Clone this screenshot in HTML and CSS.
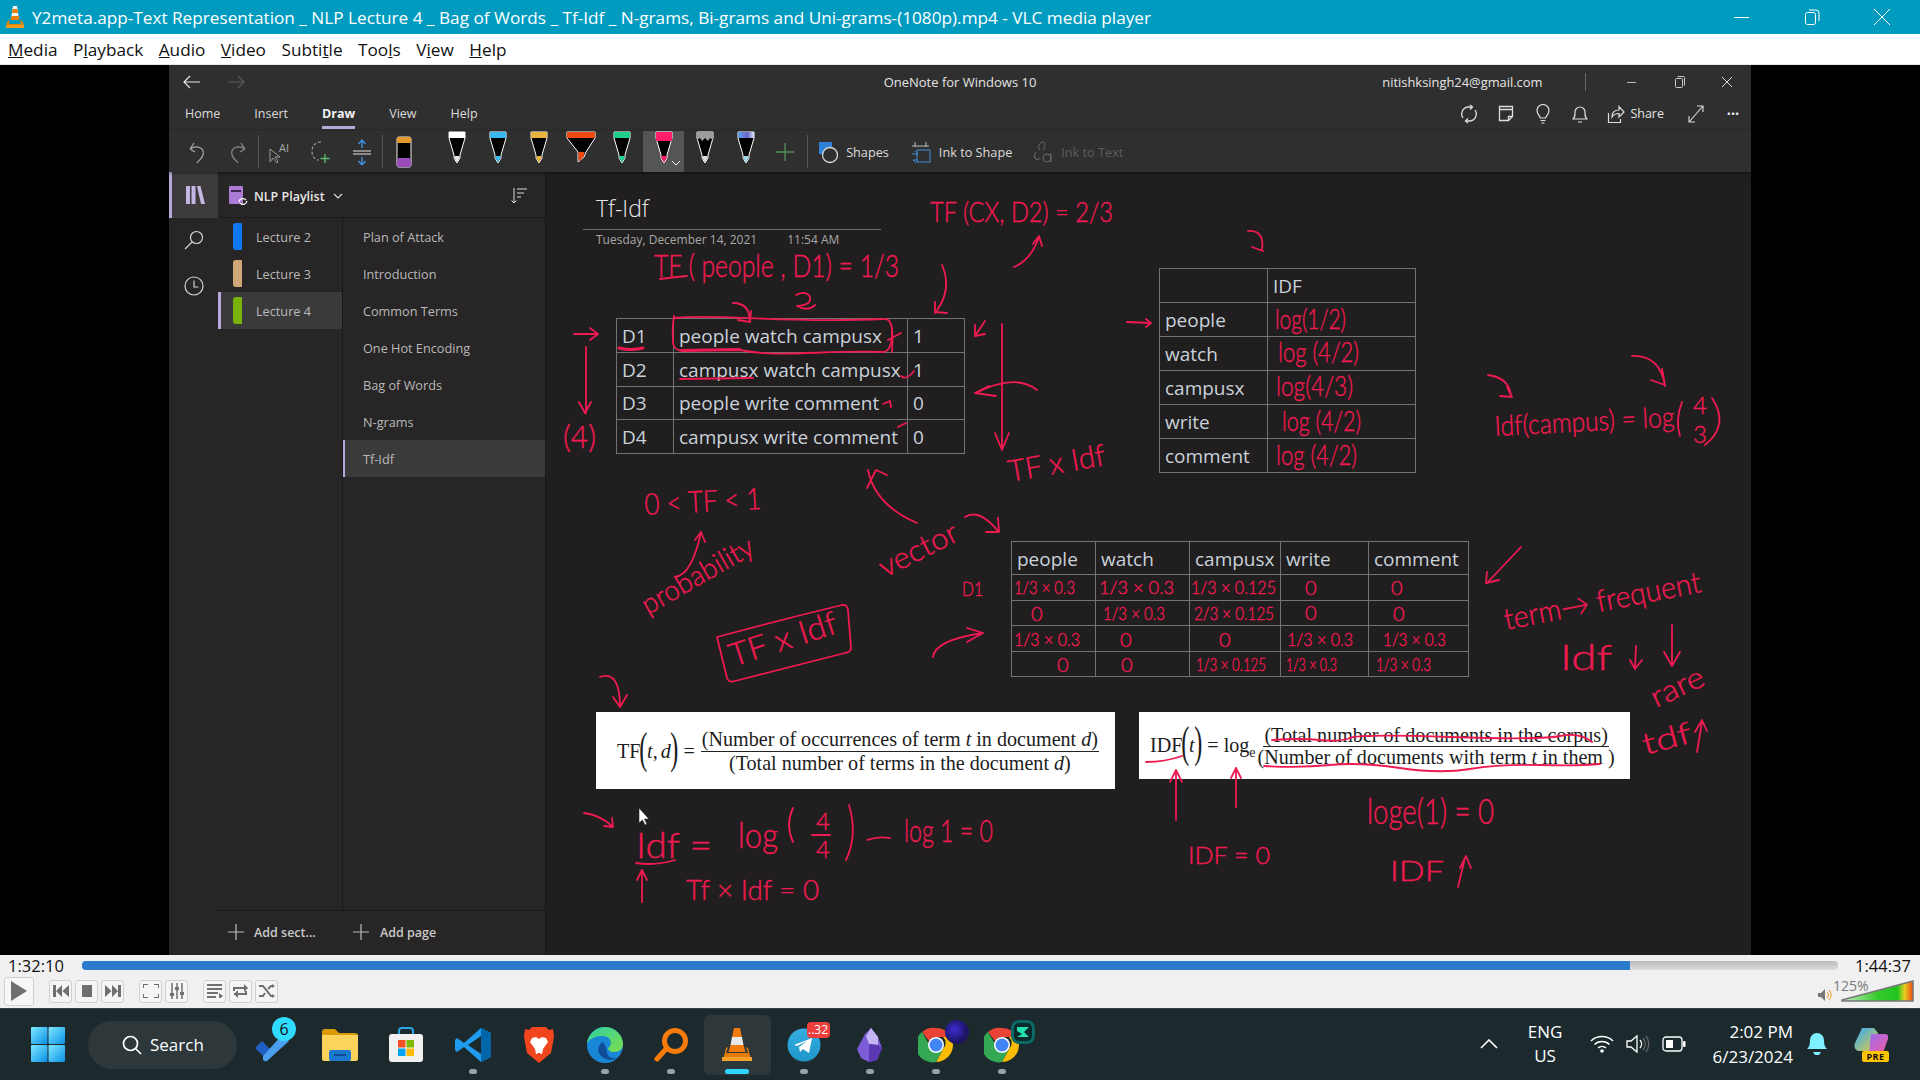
FILE: index.html
```html
<!DOCTYPE html>
<html lang="en">
<head>
<meta charset="utf-8">
<title>VLC media player</title>
<link rel="stylesheet" href="styles.css">
</head>
<body>
<div class="screen">

<header class="title-bar">
  <svg class="cone-small" viewBox="0 0 20 24"><path d="M8 1h4l2 13H6z" fill="#f5f5f5"/><path d="M7.600 4h4.800l.6 4H7zM6.400 11h7.200l.6 4H5.800z" fill="#f07d00"/><path d="M5 15l-3 2-1 6h18l-1-6-3-2 1 4H4z" fill="#e88400"/><rect x="1" y="20" width="18" height="3" fill="#f39a1c"/></svg>
  <span class="title-text">Y2meta.app-Text Representation _ NLP Lecture 4 _ Bag of Words _ Tf-Idf _ N-grams, Bi-grams and Uni-grams-(1080p).mp4 - VLC media player</span>
  <div class="win-btns">
    <span class="win-btn"><svg width="16" height="16" viewBox="0 0 16 16"><path d="M0 8.500h15" stroke="#fff" fill="none"/></svg></span>
    <span class="win-btn"><svg width="16" height="16" viewBox="0 0 16 16"><rect x="1.500" y="3.500" width="10" height="12" rx="2" stroke="#fff" fill="none"/><path d="M5 1h7a3 3 0 0 1 3 3v8" stroke="#fff" fill="none"/></svg></span>
    <span class="win-btn"><svg width="18" height="18" viewBox="0 0 18 18"><path d="M1 1l16 16M17 1L1 17" stroke="#fff" fill="none"/></svg></span>
  </div>
</header>

<nav class="menu-bar">
  <span class="menu-item"><u>M</u>edia</span>
  <span class="menu-item">P<u>l</u>ayback</span>
  <span class="menu-item"><u>A</u>udio</span>
  <span class="menu-item"><u>V</u>ideo</span>
  <span class="menu-item">Subti<u>t</u>le</span>
  <span class="menu-item">Too<u>l</u>s</span>
  <span class="menu-item">V<u>i</u>ew</span>
  <span class="menu-item"><u>H</u>elp</span>
</nav>

<main class="video">
<div class="app">

  <div class="app-bar">
    <div class="app-nav">
      <span class="nav-slot"><svg width="18" height="14" viewBox="0 0 18 14"><path d="M17 7H1M7 1L1 7l6 6" stroke="#e8e8e8" stroke-width="1.200" fill="none"/></svg></span>
      <span class="nav-slot"><svg width="18" height="14" viewBox="0 0 18 14"><path d="M1 7h16M11 1l6 6-6 6" stroke="#5c5b5b" stroke-width="1.200" fill="none"/></svg></span>
    </div>
    <div class="app-title">OneNote for Windows 10</div>
    <div class="app-account">
      <span class="account-mail">nitishksingh24@gmail.com</span>
      <span class="account-sep"></span>
      <span class="app-win"><svg width="12" height="12" viewBox="0 0 12 12"><path d="M1 6.500h9" stroke="#bbb" fill="none"/></svg></span>
      <span class="app-win"><svg width="12" height="14" viewBox="0 0 12 14"><rect x="1.500" y="3.500" width="7" height="9" rx="1" stroke="#ccc" fill="none"/><path d="M3.500 1.500h6a1 1 0 0 1 1 1v8" stroke="#ccc" fill="none"/></svg></span>
      <span class="app-win"><svg width="12" height="12" viewBox="0 0 12 12"><path d="M1 1l10 10M11 1L1 11" stroke="#ddd" fill="none"/></svg></span>
    </div>
  </div>

  <div class="tabs">
    <span class="tab">Home</span>
    <span class="tab">Insert</span>
    <span class="tab tab-active">Draw</span>
    <span class="tab">View</span>
    <span class="tab">Help</span>
    <div class="tab-tools">
      <span class="tab-icon"><svg width="18" height="20" viewBox="0 0 18 20"><path d="M3 14A7 7 0 0 1 9 3h3M15 6a7 7 0 0 1-6 11H6" stroke="#ddd" stroke-width="1.300" fill="none"/><path d="M10 1l2.500 2L10 5.500M8 14.500L5.500 17 8 19" stroke="#ddd" stroke-width="1.300" fill="none"/></svg></span>
      <span class="tab-icon"><svg width="16" height="18" viewBox="0 0 16 18"><path d="M1.500 1.500h13v10l-4 4h-9z" stroke="#ddd" stroke-width="1.300" fill="none"/><path d="M1.500 4.500h13M10.500 15.500v-4h4" stroke="#ddd" stroke-width="1.300" fill="none"/></svg></span>
      <span class="tab-icon"><svg width="14" height="20" viewBox="0 0 14 20"><path d="M4.500 14C3 11 1 9.500 1 6.500a6 6 0 0 1 12 0c0 3-2 4.500-3.500 7.500zM4.500 16.500h5M5.500 19h3" stroke="#ddd" stroke-width="1.200" fill="none"/></svg></span>
      <span class="tab-icon"><svg width="16" height="20" viewBox="0 0 16 20"><path d="M1 15c2-2 2-3 2-7a5 5 0 0 1 10 0c0 4 0 5 2 7zM6 18h4" stroke="#ddd" stroke-width="1.200" fill="none"/></svg></span>
      <span class="share"><svg width="18" height="20" viewBox="0 0 18 20"><path d="M1.500 9v9.500h12V15M5 13c0-5 3-7 7-7V2.500L17 8l-5 5V9.500C9 9.500 6.500 10.500 5 13z" stroke="#ddd" stroke-width="1.200" fill="none"/></svg>Share</span>
      <span class="tab-icon tab-icon-wide"><svg width="16" height="18" viewBox="0 0 16 18"><path d="M1 17L15 1M9 1h6v6M1 11v6h6" stroke="#ddd" stroke-width="1.100" fill="none"/></svg></span>
      <span class="tab-dots">&#8226;&#8226;&#8226;</span>
    </div>
  </div>

  <div class="tools">
    <span class="tool"><svg width="20" height="24" viewBox="0 0 20 24"><path d="M3 9l5 3M3 9l4-6M3 9c6-4 15-2 13 6-1 4-5 6-6 8" stroke="#a9a9a9" stroke-width="1.200" fill="none"/></svg></span>
    <span class="tool tool-dim"><svg width="20" height="24" viewBox="0 0 20 24"><path d="M17 9l-5 3M17 9l-4-6M17 9C11 5 2 7 4 15c1 4 5 6 6 8" stroke="#8d8c8c" stroke-width="1.200" fill="none"/></svg></span>
    <span class="tool-sep"></span>
    <span class="tool tool-lasso"><svg width="22" height="26" viewBox="0 0 22 26"><path d="M2 10v13l3-4 4 5 1-2-3-4h5z" stroke="#9a9a9a" fill="none"/></svg><span class="lasso-a">AI</span></span>
    <span class="tool"><svg width="22" height="26" viewBox="0 0 22 26"><path d="M11 3c-5 0-9 3-9 9s3 9 7 9" stroke="#9a9a9a" stroke-width="1.200" stroke-dasharray="3 2" fill="none"/><path d="M15 15v9M10.500 19.500h9" stroke="#58b96a" stroke-width="1.400" fill="none"/></svg></span>
    <span class="tool"><svg width="20" height="26" viewBox="0 0 20 26"><path d="M1 12h18M1 15h18" stroke="#a9a9a9" stroke-width="1.300" fill="none"/><path d="M10 1v8M6.500 5L10 1l3.500 4M10 18v8M6.500 22l3.500 4 3.500-4" stroke="#3d8fd8" stroke-width="1.500" fill="none"/></svg></span>
    <span class="tool-sep"></span>
    <span class="tool"><svg width="16" height="32" viewBox="0 0 16 32"><rect x="1" y="1" width="14" height="30" rx="2" fill="#000" stroke="#f2f2f2"/><rect x="1" y="1" width="14" height="6" fill="#e59a2f"/><rect x="1" y="22" width="14" height="9" rx="2" fill="#9a4cb8"/></svg></span>
    <div class="pens">
      <span class="pen"><svg width="18" height="32" viewBox="0 0 18 32"><path d="M1 1h16v6l-5 17v3l-3 5-3-5v-3L1 7z" fill="#000" stroke="#fff"/><rect x="1" y="1" width="16" height="6" fill="#fff"/><path d="M6.500 25h5v2l-2.500 4.500L6.500 27z" fill="#e8e8e8"/></svg></span>
      <span class="pen"><svg width="18" height="32" viewBox="0 0 18 32"><path d="M1 1h16v6l-5 17v3l-3 5-3-5v-3L1 7z" fill="#000" stroke="#fff"/><rect x="1" y="1" width="16" height="6" fill="#3ab8f0"/><path d="M6.500 25h5v2l-2.500 4.500L6.500 27z" fill="#3ab8f0"/></svg></span>
      <span class="pen"><svg width="18" height="32" viewBox="0 0 18 32"><path d="M1 1h16v6l-5 17v3l-3 5-3-5v-3L1 7z" fill="#000" stroke="#fff"/><rect x="1" y="1" width="16" height="6" fill="#e8b23e"/><path d="M6.500 25h5v2l-2.500 4.500L6.500 27z" fill="#e8b23e"/></svg></span>
      <span class="pen"><svg width="30" height="32" viewBox="0 0 30 32"><path d="M1 1h28v6l-9 14-2 5-6 5v-10L1 7z" fill="#000" stroke="#fff"/><rect x="1" y="1" width="28" height="6" fill="#ef4a12"/><path d="M12.500 21h6l-1 5-5 4.500z" fill="#ef4a12"/></svg></span>
      <span class="pen"><svg width="18" height="32" viewBox="0 0 18 32"><path d="M1 1h16v6l-5 17v3l-3 5-3-5v-3L1 7z" fill="#000" stroke="#fff"/><rect x="1" y="1" width="16" height="6" fill="#1fd08c"/><path d="M6.500 25h5v2l-2.500 4.500L6.500 27z" fill="#1fd08c"/></svg></span>
      <span class="pen pen-active"><svg width="18" height="32" viewBox="0 0 18 32"><path d="M1 1h16v6l-5 17v3l-3 5-3-5v-3L1 7z" fill="#000" stroke="#fff"/><rect x="1" y="1" width="16" height="9" fill="#ff1f6d"/><path d="M6.500 25h5v2l-2.500 4.500L6.500 27z" fill="#ff1f6d"/></svg><svg class="pen-chev" width="10" height="6" viewBox="0 0 10 6"><path d="M1 1l4 4 4-4" stroke="#eee" fill="none"/></svg></span>
      <span class="pen"><svg width="18" height="32" viewBox="0 0 18 32"><path d="M1 1h16v6l-5 17v3l-3 5-3-5v-3L1 7z" fill="#000" stroke="#fff"/><path d="M1 1h16v8l-3-2-2 3-3-3-3 3-2-3-3 2z" fill="#9d9d9d"/><path d="M6.500 25h5v2l-2.500 4.500L6.500 27z" fill="#ddd"/></svg></span>
      <span class="pen"><svg width="18" height="32" viewBox="0 0 18 32"><defs><linearGradient id="galaxy" x1="0" y1="0" x2="1" y2="0"><stop offset="0" stop-color="#5aa7e8"/><stop offset="0.600" stop-color="#6c63c8"/><stop offset="1" stop-color="#d6e8f8"/></linearGradient></defs><path d="M1 1h16v6l-5 17v3l-3 5-3-5v-3L1 7z" fill="#000" stroke="#fff"/><rect x="1" y="1" width="16" height="6" fill="url(#galaxy)"/><path d="M6.500 25h5v2l-2.500 4.500L6.500 27z" fill="#9fd7ee"/></svg></span>
    </div>
    <span class="tool-plus"><svg width="18" height="18" viewBox="0 0 18 18"><path d="M9 0v18M0 9h18" stroke="#4d8f5c" stroke-width="1.300" fill="none"/></svg></span>
    <span class="tool-sep tool-sep-b"></span>
    <span class="tool-text"><svg width="20" height="24" viewBox="0 0 20 24"><rect x="1" y="2" width="13" height="12" fill="#2f80d8"/><circle cx="12" cy="15" r="7.500" fill="#302f2f" stroke="#d5d5d5" stroke-width="1.300"/></svg>Shapes</span>
    <span class="tool-text tool-text-ink"><svg width="20" height="24" viewBox="0 0 20 24"><path d="M1 6h17M4 2v5M15 2v5" stroke="#bbb" fill="none"/><rect x="6" y="10" width="13" height="12" stroke="#3d8fd8" fill="none"/><path d="M1 14h6l-3-3M7 20H2l3 3" stroke="#3d8fd8" fill="none"/></svg>Ink to Shape</span>
    <span class="tool-text tool-text-off"><svg width="20" height="24" viewBox="0 0 20 24"><path d="M7 10c-3-3 0-8 3-8s2 5 0 8M3 12c-2 2-2 6 1 8M1 17l3 3 3-2" stroke="#6b6a6a" fill="none"/><circle cx="14" cy="18" r="4" stroke="#6b6a6a" fill="none"/><path d="M18 13v9" stroke="#6b6a6a" fill="none"/></svg>Ink to Text</span>
  </div>

  <div class="body">
    <aside class="rail">
      <span class="rail-item rail-active"><svg width="20" height="18" viewBox="0 0 20 18"><path d="M1 0h4v18H1zM6.500 0h4v18h-4zM12 0l3.500 0 4.500 18h-4z" fill="#c4b7e4"/></svg></span>
      <span class="rail-item"><svg width="20" height="20" viewBox="0 0 20 20"><circle cx="12.500" cy="7.500" r="6" stroke="#d5d5d5" stroke-width="1.200" fill="none"/><path d="M8.300 11.800L1 19" stroke="#d5d5d5" stroke-width="1.200" fill="none"/></svg></span>
      <span class="rail-item"><svg width="20" height="20" viewBox="0 0 20 20"><circle cx="10" cy="10" r="9" stroke="#d5d5d5" stroke-width="1.200" fill="none"/><path d="M10 4.500V11h4.500" stroke="#d5d5d5" stroke-width="1.200" fill="none"/></svg></span>
    </aside>

    <aside class="panel">
      <div class="notebook">
        <svg class="nb-icon" width="20" height="22" viewBox="0 0 20 22"><rect x="0" y="1" width="14" height="18" rx="1" fill="#ab7bd6"/><rect x="2" y="5" width="10" height="2" fill="#3c2a55"/><path d="M10 17a4 4 0 0 1 7-2M18 16a4 4 0 0 1-7 2" stroke="#fff" stroke-width="1.300" fill="none"/></svg>
        <span class="nb-name">NLP Playlist</span>
        <svg class="nb-chev" width="10" height="6" viewBox="0 0 10 6"><path d="M1 1l4 4 4-4" stroke="#ddd" stroke-width="1.200" fill="none"/></svg>
        <svg class="nb-sort" width="16" height="16" viewBox="0 0 16 16"><path d="M3 0v15M0.500 12.500L3 15l2.500-2.500M6 1h10M6 5h7M6 9h4" stroke="#ddd" fill="none"/></svg>
      </div>
      <div class="lists">
        <ul class="sections">
          <li class="section"><span class="sec-tab sec-blue"></span>Lecture 2</li>
          <li class="section"><span class="sec-tab sec-tan"></span>Lecture 3</li>
          <li class="section section-active"><span class="sec-tab sec-green"></span>Lecture 4</li>
        </ul>
        <ul class="pages">
          <li class="page">Plan of Attack</li>
          <li class="page">Introduction</li>
          <li class="page">Common Terms</li>
          <li class="page">One Hot Encoding</li>
          <li class="page">Bag of Words</li>
          <li class="page">N-grams</li>
          <li class="page page-active">Tf-Idf</li>
        </ul>
      </div>
      <div class="panel-foot">
        <span class="add add-sect"><svg width="18" height="18" viewBox="0 0 18 18"><path d="M9 1v16M1 9h16" stroke="#bdbdbd" stroke-width="1.200" fill="none"/></svg>Add sect...</span>
        <span class="add add-page"><svg width="18" height="18" viewBox="0 0 18 18"><path d="M9 1v16M1 9h16" stroke="#bdbdbd" stroke-width="1.200" fill="none"/></svg>Add page</span>
      </div>
    </aside>

    <section class="canvas">
      <div class="page-head">
        <div class="page-title">Tf-Idf</div>
        <div class="page-meta"><span>Tuesday, December 14, 2021</span><span>11:54 AM</span></div>
      </div>

      <table class="grid t-docs">
        <tr><td class="c-doc">D1</td><td class="c-text">people watch campusx</td><td>1</td></tr>
        <tr><td>D2</td><td>campusx watch campusx</td><td>1</td></tr>
        <tr><td>D3</td><td>people write comment</td><td>0</td></tr>
        <tr><td>D4</td><td>campusx write comment</td><td>0</td></tr>
      </table>

      <table class="grid t-idf">
        <tr><td class="c-word"></td><td>IDF</td></tr>
        <tr><td>people</td><td></td></tr>
        <tr><td>watch</td><td></td></tr>
        <tr><td>campusx</td><td></td></tr>
        <tr><td>write</td><td></td></tr>
        <tr><td>comment</td><td></td></tr>
      </table>

      <table class="grid t-vec">
        <tr class="r-head"><td class="v1">people</td><td class="v2">watch</td><td class="v3">campusx</td><td class="v4">write</td><td>comment</td></tr>
        <tr><td></td><td></td><td></td><td></td><td></td></tr>
        <tr><td></td><td></td><td></td><td></td><td></td></tr>
        <tr><td></td><td></td><td></td><td></td><td></td></tr>
        <tr><td></td><td></td><td></td><td></td><td></td></tr>
      </table>

      <div class="formula f-tf">
        <span>TF</span><span class="paren">(</span><i>t</i><span class="comma">,</span><i>d</i><span class="paren">)</span><span class="eq">=</span>
        <div class="frac">
          <span class="num">(Number of occurrences of term <i>t</i> in document <i>d</i>)</span>
          <span class="den">(Total number of terms in the document <i>d</i>)</span>
        </div>
      </div>

      <div class="formula f-idf">
        <span>IDF</span><span class="paren">(</span><i>t</i><span class="paren">)</span><span class="eq">=</span><span>log</span><sub>e</sub>
        <div class="frac">
          <span class="num">(Total number of documents in the corpus)</span>
          <span class="den">(Number of documents with term <i>t</i> in them )</span>
        </div>
      </div>

      <svg class="ink" width="1205" height="783" viewBox="546 172 1205 783">
        <g class="ink-lines">
          <path d="M1014 267Q1031 260 1039 237M1033 244L1039 236 1042 246"/>
          <path d="M660 279Q675 277 687 276"/>
          <path d="M733 303Q750 303 750 322M738 320L750 322 751 311"/>
          <path d="M796 295Q806 290 810 297Q812 305 797 306Q808 312 815 305"/>
          <path d="M942 265Q953 290 935 313M935 302L935 312 947 313"/>
          <path d="M574 334L597 334M590 328L598 334 590 340"/>
          <path d="M586 347L586 413M579 402L585 413 591 402"/>
          <path d="M674 318C720 313 780 324 883 319Q892 318 892 332 892 350 884 352C820 350 780 358 740 350L685 351Q672 352 673 338Q672 328 674 316"/>
          <path d="M680 350L740 349" />
          <path class="thick" d="M619 348Q630 351 643 348"/>
          <path d="M680 379L753 378"/>
          <path d="M888 340L901 333M892 328Q893 340 892 352"/>
          <path d="M901 376Q906 381 914 371"/>
          <path d="M883 404L890 401 891 407"/>
          <path d="M898 427L906 423"/>
          <path d="M985 321L975 336M975 325L975 336 985 334"/>
          <path d="M1002 324L1002 450M995 433L1002 450 1009 433"/>
          <path d="M1037 390Q1015 373 976 393M989 386L975 393 996 396"/>
          <path d="M868 470Q875 505 917 523M867 488L876 470 887 475"/>
          <path d="M965 517Q979 508 998 531M986 532L999 532 998 518"/>
          <path d="M933 657Q935 640 983 633M967 628L983 633 967 642"/>
          <path d="M675 577Q692 575 701 532M695 540L701 532 705 542"/>
          <path d="M717 637Q780 620 842 605Q847 604 848 610L851 648Q851 652 845 653L735 681Q729 683 727 678z"/>
          <path d="M600 677Q620 670 620 707M613 697L620 707 627 695"/>
          <path d="M1248 231Q1265 230 1262 250M1252 247L1263 251"/>
          <path d="M1127 322L1151 323M1146 319L1151 323 1146 327"/>
          <path d="M1488 375Q1510 378 1511 397M1500 396L1512 397 1507 387"/>
          <path d="M1632 356Q1660 355 1665 386M1651 380L1665 385 1662 369"/>
          <path d="M1682 402Q1675 420 1680 436M1712 398Q1730 425 1705 445"/>
          <path d="M1521 547L1487 583M1487 572L1486 583 1499 580"/>
          <path d="M1636 646L1635 668M1630 660L1635 669 1642 660"/>
          <path d="M1672 625L1672 665M1664 652L1672 666 1680 652"/>
          <path d="M1697 752L1702 722M1695 732L1702 720 1707 731"/>
          <path d="M636 863Q655 866 675 860"/>
          <path d="M793 808Q785 825 793 842M849 805Q858 835 846 860"/>
          <path d="M812 835L830 835"/>
          <path d="M867 840Q878 836 890 838"/>
          <path d="M642 902L642 870M637 880L642 870 647 880"/>
          <path d="M1176 820L1176 772M1170 782L1176 770 1182 782"/>
          <path d="M1236 807L1236 768M1231 778L1236 768 1241 778"/>
          <path d="M1146 762Q1165 762 1182 756"/>
          <path d="M1272 740Q1300 738 1320 740T1350 738T1450 737T1560 736T1592 742"/>
          <path d="M1264 766Q1300 768 1330 765T1400 768T1470 769T1540 765T1600 764"/>
          <path d="M1458 887L1465 858M1460 868L1466 856 1471 868"/>
          <path d="M584 813Q600 815 612 826M604 826L613 827 612 818"/>
        </g>
        <g class="ink-text">
          <text class="s28" x="930" y="222" textLength="183" lengthAdjust="spacingAndGlyphs">TF (CX, D2) = 2/3</text>
          <text class="s32" x="654" y="277" textLength="245" lengthAdjust="spacingAndGlyphs">TF ( people , D1) = 1/3</text>
          <text class="s32" x="563" y="448" textLength="33" lengthAdjust="spacingAndGlyphs">(4)</text>
          <text class="s30" transform="rotate(-10 1010 482)" x="1010" y="482" textLength="98" lengthAdjust="spacingAndGlyphs">TF x Idf</text>
          <text class="s30" transform="rotate(-3 645 515)" x="645" y="515" textLength="117" lengthAdjust="spacingAndGlyphs">0 &lt; TF &lt; 1</text>
          <text class="s30" transform="rotate(-27 885 578)" x="885" y="578" textLength="85" lengthAdjust="spacingAndGlyphs">vector</text>
          <text class="s20" x="962" y="596" textLength="21" lengthAdjust="spacingAndGlyphs">D1</text>
          <text class="s28" transform="rotate(-30 648 615)" x="648" y="615" textLength="125" lengthAdjust="spacingAndGlyphs">probability</text>
          <text class="s32" transform="rotate(-18 733 667)" x="733" y="667" textLength="112" lengthAdjust="spacingAndGlyphs">TF x Idf</text>

          <text class="s28" x="1275" y="329" textLength="71" lengthAdjust="spacingAndGlyphs">log(1/2)</text>
          <text class="s28" x="1278" y="362" textLength="81" lengthAdjust="spacingAndGlyphs">log (4/2)</text>
          <text class="s28" x="1276" y="396" textLength="77" lengthAdjust="spacingAndGlyphs">log(4/3)</text>
          <text class="s28" x="1282" y="431" textLength="79" lengthAdjust="spacingAndGlyphs">log (4/2)</text>
          <text class="s28" x="1276" y="465" textLength="81" lengthAdjust="spacingAndGlyphs">log (4/2)</text>

          <text class="s28" transform="rotate(-3 1495 436)" x="1495" y="436" textLength="180" lengthAdjust="spacingAndGlyphs">Idf(campus) = log</text>
          <text class="s24" x="1693" y="414">4</text>
          <text class="s24" x="1693" y="443">3</text>

          <text class="s18" x="1014" y="594" textLength="61" lengthAdjust="spacingAndGlyphs">1/3 × 0.3</text>
          <text class="s18" x="1099" y="594" textLength="75" lengthAdjust="spacingAndGlyphs">1/3 ×  0.3</text>
          <text class="s18" x="1191" y="594" textLength="85" lengthAdjust="spacingAndGlyphs">1/3 × 0.125</text>
          <text class="s20" x="1305" y="595">0</text>
          <text class="s20" x="1391" y="595">0</text>
          <text class="s20" x="1031" y="621">0</text>
          <text class="s18" x="1103" y="620" textLength="62" lengthAdjust="spacingAndGlyphs">1/3 × 0.3</text>
          <text class="s18" x="1194" y="620" textLength="80" lengthAdjust="spacingAndGlyphs">2/3 × 0.125</text>
          <text class="s20" x="1305" y="620">0</text>
          <text class="s20" x="1393" y="621">0</text>
          <text class="s18" x="1014" y="646" textLength="66" lengthAdjust="spacingAndGlyphs">1/3 × 0.3</text>
          <text class="s20" x="1120" y="647">0</text>
          <text class="s20" x="1219" y="647">0</text>
          <text class="s18" x="1287" y="646" textLength="66" lengthAdjust="spacingAndGlyphs">1/3 × 0.3</text>
          <text class="s18" x="1383" y="646" textLength="63" lengthAdjust="spacingAndGlyphs">1/3 × 0.3</text>
          <text class="s20" x="1057" y="672">0</text>
          <text class="s20" x="1121" y="672">0</text>
          <text class="s18" x="1196" y="671" textLength="70" lengthAdjust="spacingAndGlyphs">1/3 × 0.125</text>
          <text class="s18" x="1286" y="671" textLength="51" lengthAdjust="spacingAndGlyphs">1/3 × 0.3</text>
          <text class="s18" x="1376" y="671" textLength="55" lengthAdjust="spacingAndGlyphs">1/3 × 0.3</text>

          <text class="s30" transform="rotate(-11 1506 630)" x="1506" y="630" textLength="200" lengthAdjust="spacingAndGlyphs">term→ frequent</text>
          <text class="s36" x="1560" y="670" textLength="52" lengthAdjust="spacingAndGlyphs">Idf</text>
          <text class="s30" transform="rotate(-25 1656 708)" x="1656" y="708" textLength="56" lengthAdjust="spacingAndGlyphs">rare</text>
          <text class="s30" transform="rotate(-15 1645 755)" x="1645" y="755" textLength="50" lengthAdjust="spacingAndGlyphs">tdf</text>

          <text class="s36" x="636" y="858" textLength="76" lengthAdjust="spacingAndGlyphs">Idf =</text>
          <text class="s36" x="738" y="848" textLength="40" lengthAdjust="spacingAndGlyphs">log</text>
          <text class="s24" x="816" y="830">4</text>
          <text class="s24" x="816" y="858">4</text>
          <text class="s32" x="904" y="842" textLength="89" lengthAdjust="spacingAndGlyphs">log 1 = 0</text>
          <text class="s28" x="686" y="900" textLength="133" lengthAdjust="spacingAndGlyphs">Tf × Idf = 0</text>
          <text class="s24" x="1188" y="864" textLength="82" lengthAdjust="spacingAndGlyphs">IDF = 0</text>
          <text class="s36" x="1367" y="824" textLength="127" lengthAdjust="spacingAndGlyphs">loge(1) = 0</text>
          <text class="s28" x="1390" y="881" textLength="54" lengthAdjust="spacingAndGlyphs">IDF</text>
        </g>
        <path class="pointer" d="M639 808L639 823 642.500 820 645 825 647 824 644.500 819 649 819z"/>
      </svg>
    </section>
  </div>
</div>
</main>

<section class="player">
  <div class="seek-row">
    <span class="time">1:32:10</span>
    <div class="seek"><div class="seek-fill"></div></div>
    <span class="time">1:44:37</span>
  </div>
  <div class="ctrl-row">
    <span class="btn btn-play"><svg width="16" height="20" viewBox="0 0 16 20"><path d="M0 0l16 10L0 20z" fill="#6f6f6f"/></svg></span>
    <div class="btn-group">
      <span class="btn"><svg width="16" height="12" viewBox="0 0 16 12"><path d="M0 0h3v12H0zM9 0v12L3 6zM16 0v12L9.500 6z" fill="#6f6f6f"/></svg></span>
      <span class="btn"><svg width="10" height="12" viewBox="0 0 10 12"><rect width="10" height="12" fill="#6f6f6f"/></svg></span>
      <span class="btn"><svg width="16" height="12" viewBox="0 0 16 12"><path d="M16 0h-3v12h3zM7 0v12l6-6zM0 0v12l6.500-6z" fill="#6f6f6f"/></svg></span>
    </div>
    <div class="btn-group">
      <span class="btn"><svg width="16" height="14" viewBox="0 0 16 14"><path d="M0 4V0h5M11 0h5v4M16 10v4h-5M5 14H0v-4" stroke="#6f6f6f" stroke-width="2" fill="none"/></svg></span>
      <span class="btn"><svg width="16" height="16" viewBox="0 0 16 16"><path d="M3 0v16M8 0v16M13 0v16" stroke="#6f6f6f" stroke-width="1.500"/><path d="M1 10h4v3H1zM6 4h4v3H6zM11 9h4v3h-4z" fill="#6f6f6f"/></svg></span>
    </div>
    <div class="btn-group">
      <span class="btn"><svg width="16" height="14" viewBox="0 0 16 14"><path d="M0 1h15M0 5h15M0 9h11M0 13h9" stroke="#6f6f6f" stroke-width="2"/><path d="M12 9l4 3-4 3z" fill="#6f6f6f"/></svg></span>
      <span class="btn"><svg width="16" height="14" viewBox="0 0 16 14"><path d="M1 7V4h12M1 10h12V7" stroke="#6f6f6f" stroke-width="2" fill="none"/><path d="M11 0l4 4-4 4zM5 6l-4 4 4 4z" fill="#6f6f6f"/></svg></span>
      <span class="btn"><svg width="16" height="14" viewBox="0 0 16 14"><path d="M0 2h4l8 10h2M0 12h4l2-3M9 5l3-3h2" stroke="#6f6f6f" stroke-width="2" fill="none"/><path d="M13 0l3 2-3 2zM13 10l3 2-3 2z" fill="#6f6f6f"/></svg></span>
    </div>
    <div class="volume">
      <svg class="vol-icon" width="14" height="12" viewBox="0 0 14 12"><path d="M0 4h3l4-4v12L3 8H0z" fill="#777"/><path d="M9 3a4 4 0 0 1 0 6M11 1a7 7 0 0 1 0 10" stroke="#f09020" fill="none"/></svg>
      <span class="vol-label">125%</span>
      <svg class="vol-bar" width="73" height="22" viewBox="0 0 73 22"><defs><linearGradient id="volg" x1="0" x2="1" y1="0" y2="0"><stop offset="0" stop-color="#c8efc8"/><stop offset="0.500" stop-color="#36c92c"/><stop offset="0.780" stop-color="#1fc51f"/><stop offset="0.880" stop-color="#e8d020"/><stop offset="1" stop-color="#f04a10"/></linearGradient></defs><path d="M1 20L72 1v20H1z" fill="url(#volg)" stroke="#777" stroke-width="1.500"/></svg>
    </div>
  </div>
</section>

<footer class="taskbar">
  <svg class="win-logo" width="34" height="35" viewBox="0 0 34 35"><defs><linearGradient id="wing" x1="0" y1="0" x2="1" y2="1"><stop offset="0" stop-color="#7fe9ff"/><stop offset="1" stop-color="#0a8fe6"/></linearGradient></defs><rect width="16.500" height="17" rx="1" fill="url(#wing)"/><rect x="17.500" width="16.500" height="17" rx="1" fill="url(#wing)"/><rect y="18" width="16.500" height="17" rx="1" fill="url(#wing)"/><rect x="17.500" y="18" width="16.500" height="17" rx="1" fill="url(#wing)"/></svg>
  <div class="search-pill">
    <svg width="20" height="20" viewBox="0 0 20 20"><circle cx="8.500" cy="8.500" r="7" stroke="#fff" stroke-width="1.700" fill="none"/><path d="M13.500 13.500L19 19" stroke="#fff" stroke-width="1.700"/></svg>
    <span>Search</span>
  </div>
  <div class="tb-icons">
    <span class="tb"><svg width="40" height="34" viewBox="0 0 40 34"><path d="M1 20l7-7 8 8-7 7z" fill="#1f5fc4"/><path d="M9 28l19-21 7 6-22 20q-2 1-4-1z" fill="#4aa0ee"/></svg><b class="badge-6">6</b></span>
    <span class="tb"><svg width="38" height="34" viewBox="0 0 38 34"><path d="M1 4q0-3 3-3h10l4 4h16q3 0 3 3v4H1z" fill="#d99a05"/><path d="M1 7h36v24q0 2-2 2H3q-2 0-2-2z" fill="#fcd45c"/><rect x="8" y="22" width="22" height="11" rx="2" fill="#1a7ad0"/><rect x="13" y="26" width="12" height="2" fill="#0a4d90"/></svg></span>
    <span class="tb"><svg width="36" height="36" viewBox="0 0 36 36"><path d="M11 8V4q0-3 3-3h8q3 0 3 3v4" stroke="#29a7e8" stroke-width="2" fill="none"/><path d="M1 10q0-3 3-3h28q3 0 3 3v22q0 3-3 3H4q-3 0-3-3z" fill="#f1f1f1"/><rect x="10" y="13" width="7.500" height="7.500" fill="#f25022"/><rect x="18.500" y="13" width="7.500" height="7.500" fill="#7fba00"/><rect x="10" y="21.500" width="7.500" height="7.500" fill="#00a4ef"/><rect x="18.500" y="21.500" width="7.500" height="7.500" fill="#ffb900"/></svg></span>
    <span class="tb"><svg width="36" height="36" viewBox="0 0 36 36"><path d="M26 1l10 5v24l-10 5-17-15-7 5-2-2v-10l2-2 7 5z" fill="#1f9cf0"/><path d="M26 1v34l10-5V6z" fill="#0065a9"/><path d="M26 9L13 18l13 9z" fill="#1c2a2e"/></svg></span>
    <span class="tb"><svg width="30" height="36" viewBox="0 0 30 36"><path d="M8 0h14l3 3 4-1 1 8-3 16-12 10L3 26 0 10l1-8 4 1z" fill="#f1451d"/><path d="M8 11l4-1 3 2 3-2 4 1 2 4-5 7-1 5h-6l-1-5-5-7z" fill="#fff"/><path d="M13 26h4l-2 3z" fill="#f1451d"/></svg></span>
    <span class="tb"><svg width="36" height="36" viewBox="0 0 36 36"><defs><linearGradient id="edg" x1="0" y1="0" x2="1" y2="1"><stop offset="0" stop-color="#2ed1a2"/><stop offset="1" stop-color="#7cdd4d"/></linearGradient></defs><circle cx="18" cy="18" r="18" fill="#1a87d6"/><path d="M0 17C1 6 10 0 18 0c10 0 18 8 18 17 0 5-4 8-9 8-4 0-6-2-6-4 4-2 5-12-6-12C8 9 2 12 0 17z" fill="url(#edg)"/><path d="M16 15c-5 2-7 10-1 15 5 4 12 4 17 0-6 3-12 0-12-5 0-2-2-8-4-10z" fill="#104e9a"/></svg></span>
    <span class="tb"><svg width="34" height="34" viewBox="0 0 34 34"><circle cx="21" cy="13" r="10.500" stroke="#f97c0a" stroke-width="5" fill="none"/><path d="M12 21L3 31" stroke="#f97c0a" stroke-width="5" stroke-linecap="round"/></svg></span>
    <span class="tb tb-vlc"><svg width="30" height="35" viewBox="0 0 30 35"><path d="M12 1h6l2 9H10z" fill="#f47b0d"/><path d="M10 10h10l1.500 8h-13z" fill="#e8e8e8"/><path d="M8.500 18h13l2 7h-17z" fill="#f47b0d"/><path d="M6 20l-2 1-3 12h28l-3-12-2-1 2 6H4z" fill="#e27c06"/><path d="M0 30h30v4H0z" fill="#f7a02a"/></svg></span>
    <span class="tb"><svg width="34" height="34" viewBox="0 0 34 34"><defs><linearGradient id="tg" x1="0" y1="0" x2="0" y2="1"><stop offset="0" stop-color="#37aee2"/><stop offset="1" stop-color="#1e96c8"/></linearGradient></defs><circle cx="17" cy="17" r="16.500" fill="url(#tg)"/><path d="M7 17L25 10l-3 15-6-4-3 3-1-5 8-6-10 5z" fill="#fff"/></svg><b class="badge-32">..32</b></span>
    <span class="tb"><svg width="26" height="34" viewBox="0 0 26 34"><path d="M14 0l7 9 4 11-5 12-8 2-8-4L0 21 8 6z" fill="#7b5bd6"/><path d="M14 0l7 9 0 8-9-1-3-8z" fill="#c4b5f5"/><path d="M12 16l9 1 4 3-5 12-8 2z" fill="#5b38b3"/></svg></span>
    <span class="tb"><svg width="36" height="36" viewBox="0 0 36 36"><path d="M18 1a17 17 0 0 1 15 9H18a8 8 0 0 0-7 4L4 5a17 17 0 0 1 14-4z" fill="#ea4335"/><path d="M33 10a17 17 0 0 1-15 25l7-13a8 8 0 0 0 0-12z" fill="#fbbc05"/><path d="M18 35A17 17 0 0 1 4 5l7 12a8 8 0 0 0 7 9h0l7-4z" fill="#34a853"/><circle cx="18" cy="18" r="8" fill="#fff"/><circle cx="18" cy="18" r="6.500" fill="#4285f4"/></svg><b class="avatar avatar-blue"></b></span>
    <span class="tb"><svg width="36" height="36" viewBox="0 0 36 36"><path d="M18 1a17 17 0 0 1 15 9H18a8 8 0 0 0-7 4L4 5a17 17 0 0 1 14-4z" fill="#ea4335"/><path d="M33 10a17 17 0 0 1-15 25l7-13a8 8 0 0 0 0-12z" fill="#fbbc05"/><path d="M18 35A17 17 0 0 1 4 5l7 12a8 8 0 0 0 7 9h0l7-4z" fill="#34a853"/><circle cx="18" cy="18" r="8" fill="#fff"/><circle cx="18" cy="18" r="6.500" fill="#4285f4"/></svg><b class="avatar avatar-teal"><svg width="12" height="10" viewBox="0 0 12 10"><path d="M0 0h12L7 5l5 5H0l5-3-5-3z" fill="#22e0b0"/></svg></b></span>
  </div>
  <div class="tray">
    <svg class="tray-chev" width="18" height="10" viewBox="0 0 18 10"><path d="M1 9l8-8 8 8" stroke="#fff" stroke-width="1.600" fill="none"/></svg>
    <div class="lang"><span>ENG</span><span>US</span></div>
    <svg class="tray-wifi" width="24" height="18" viewBox="0 0 24 18"><path d="M1 6a16 16 0 0 1 22 0M4.500 9.500a11 11 0 0 1 15 0M8 13a6 6 0 0 1 8 0" stroke="#fff" stroke-width="1.500" fill="none"/><circle cx="12" cy="16" r="1.800" fill="#fff"/></svg>
    <svg class="tray-vol" width="24" height="20" viewBox="0 0 24 20"><path d="M1 7h4l6-5v16l-6-5H1z" stroke="#fff" stroke-width="1.300" fill="none"/><path d="M14 6a6 6 0 0 1 0 8" stroke="#fff" stroke-width="1.300" fill="none"/><path d="M17 4a9 9 0 0 1 0 12M20 2a13 13 0 0 1 0 16" stroke="#666" stroke-width="1.300" fill="none"/></svg>
    <svg class="tray-bat" width="24" height="16" viewBox="0 0 24 16"><rect x="1" y="1" width="19" height="14" rx="3" stroke="#fff" stroke-width="1.300" fill="none"/><rect x="4" y="4" width="7" height="8" fill="#fff"/><rect x="21" y="5" width="2.500" height="6" rx="1" fill="#fff"/></svg>
    <div class="clock"><span>2:02 PM</span><span>6/23/2024</span></div>
    <svg class="tray-bell" width="20" height="24" viewBox="0 0 20 24"><path d="M10 1a7 7 0 0 1 7 7c0 5 1 7 3 9H0c2-2 3-4 3-9a7 7 0 0 1 7-7z" fill="#7ff0ff"/><path d="M6 20h8l-2 3H8z" fill="#7ff0ff"/></svg>
    <span class="copilot"><svg width="35" height="28" viewBox="0 0 35 28"><defs><linearGradient id="cpa" x1="0" y1="0" x2="1" y2="1"><stop offset="0" stop-color="#2fa7ff"/><stop offset="1" stop-color="#e8cf3a"/></linearGradient><linearGradient id="cpb" x1="0" y1="0" x2="1" y2="1"><stop offset="0" stop-color="#9a6cf0"/><stop offset="1" stop-color="#f05ca0"/></linearGradient></defs><path d="M8 2h12l4 5-7 18H4Q-1 23 1 17z" fill="url(#cpa)"/><path d="M17 8h14q4 0 3 5l-4 11q-1 3-4 3H15z" fill="url(#cpb)"/></svg><b class="pre">PRE</b></span>
  </div>
</footer>
</div>
</body>
</html>
```

FILE: styles.css
```css
* { box-sizing: border-box; }
html, body { margin: 0; padding: 0; background: #000; }
ul { list-style: none; margin: 0; padding: 0; }
.screen { width: 1920px; height: 1080px; display: flex; flex-direction: column; overflow: hidden; font-family: "Open Sans", "Noto Sans", sans-serif; }

/* VLC chrome */
.title-bar { height: 34px; flex: none; background: #019bbf; color: #fff; display: flex; align-items: center; padding-left: 5px; position: relative; }
.cone-small { width: 20px; height: 24px; flex: none; }
.title-text { margin-left: 7px; font-size: 17.200px; white-space: nowrap; }
.win-btns { margin-left: auto; display: flex; height: 100%; padding-right: 3px; }
.win-btn { width: 70px; display: flex; align-items: center; justify-content: center; }
.menu-bar { height: 31px; flex: none; background: #fff; display: flex; align-items: center; gap: 15.500px; padding-left: 8px; font-size: 17.200px; color: #111; border-bottom: 1px solid #e8e8e8; }

.video { height: 890px; flex: none; background: #000; display: flex; justify-content: center; }
.app { width: 1582px; display: flex; flex-direction: column; background: #302f2f; color: #ddd; font-size: 13px; }

.app-bar { height: 34px; flex: none; display: grid; grid-template-columns: 1fr auto 1fr; align-items: center; }
.app-nav { display: flex; padding-left: 1px; }
.nav-slot { width: 44px; display: flex; justify-content: center; }
.app-title { font-size: 13px; color: #e4e4e4; }
.app-account { display: flex; justify-content: flex-end; align-items: center; }
.account-mail { font-size: 12.900px; color: #e4e4e4; }
.account-sep { width: 1px; height: 18px; background: #666; margin: 0 23px 0 42px; }
.app-win { width: 47.500px; display: flex; justify-content: center; }

.tabs { height: 32px; flex: none; display: flex; align-items: center; gap: 34px; padding: 0 0 3px 16px; }
.tab { font-size: 12.500px; color: #dcdcdc; position: relative; }
.tab-active { font-weight: 700; color: #f2f2f2; }
.tab-active::after { content: ""; position: absolute; left: 0; right: 0; bottom: -7px; height: 3px; background: #b7a9d8; }
.tab-tools { margin-left: auto; display: flex; align-items: center; }
.tab-icon { width: 37px; display: flex; justify-content: center; }
.tab-icon-wide { width: 38px; margin-left: 13px; }
.share { display: flex; align-items: center; gap: 5px; margin-left: 9px; color: #e4e4e4; font-size: 12.500px; }
.tab-dots { width: 36px; text-align: center; font-size: 11px; letter-spacing: 0; color: #eee; }

.tools { height: 41px; flex: none; display: flex; align-items: center; padding-left: 7px; box-shadow: 0 1px 3px rgba(0,0,0,.5); z-index: 2; position: relative; }
.tool { width: 41px; height: 100%; display: flex; align-items: center; justify-content: center; position: relative; }
.tool-sep { width: 1px; height: 33px; background: #555; flex: none; }
.tool-lasso { justify-content: flex-start; padding-left: 9px; }
.lasso-a { position: absolute; left: 20px; top: 9px; font-size: 11px; color: #a9a9a9; }
.pens { display: flex; margin-left: 12px; height: 100%; }
.pen { width: 41.400px; height: 100%; display: flex; justify-content: center; position: relative; }
.pen-active { background: #565555; }
.pen-chev { position: absolute; right: 3px; bottom: 6px; }
.tool-plus { width: 35px; display: flex; justify-content: center; }
.tool-sep-b { margin-left: 5px; }
.tool-text { display: flex; align-items: center; gap: 8px; margin-left: 10px; font-size: 12.700px; color: #dcdcdc; }
.tool-text-ink { margin-left: 22px; }
.tool-text-off { margin-left: 21px; color: #5e5d5d; }

.body { flex: 1; display: flex; min-height: 0; }
.rail { width: 49px; flex: none; background: #272525; display: flex; flex-direction: column; }
.rail-item { height: 46px; display: flex; align-items: center; justify-content: center; padding-bottom: 2px; }
.rail-active { background: #3d3b3b; border-left: 3px solid #b7a9d8; padding-bottom: 0; }
.panel { width: 328px; flex: none; background: #272525; display: flex; flex-direction: column; border-right: 1px solid #1a1919; }
.notebook { height: 46px; flex: none; display: flex; align-items: center; padding: 3px 0 0 11px; border-bottom: 1px solid #1c1b1b; }
.nb-name { margin-left: 5px; font-size: 12.500px; font-weight: 600; color: #e8e8e8; }
.nb-chev { margin-left: 8px; }
.nb-sort { margin-left: auto; margin-right: 18px; }
.lists { flex: 1; display: flex; min-height: 0; }
.sections { width: 125px; flex: none; border-right: 1px solid #1a1919; }
.section { height: 37px; display: flex; align-items: center; padding-left: 15px; font-size: 12.700px; color: #b9b9b9; }
.section-active { background: #3b3a3a; border-left: 3px solid #b7a9d8; padding-left: 12px; }
.sec-tab { width: 9px; height: 27px; margin-right: 14px; border-radius: 3px 1px 1px 3px; flex: none; }
.sec-blue { background: #0f78f0; }
.sec-tan { background: #d0a877; }
.sec-green { background: #79b30a; }
.pages { flex: 1; }
.page { height: 37px; display: flex; align-items: center; padding-left: 20px; font-size: 12.700px; color: #b9b9b9; }
.page-active { background: #3b3a3a; border-left: 2px solid #b7a9d8; padding-left: 18px; }
.panel-foot { height: 45px; flex: none; display: flex; border-top: 1px solid #1a1919; align-items: center; padding-bottom: 2px; }
.add { display: flex; align-items: center; font-size: 12.500px; font-weight: 600; color: #c8c8c8; }
.add-sect { width: 125px; padding-left: 9px; gap: 9px; }
.add-page { padding-left: 9px; gap: 10px; }

/* Page canvas */
.canvas { flex: 1; position: relative; background: #201e1e; overflow: hidden; }
.page-head { position: absolute; left: 37px; top: 20px; width: 298px; }
.page-title { font-size: 23px; font-weight: 300; color: #e8e8e8; line-height: 32px; padding-left: 13px; border-bottom: 1px solid #6a6868; padding-bottom: 5px; }
.page-meta { display: flex; gap: 30px; padding-left: 13px; font-size: 12px; color: #a8a8a8; margin-top: 1px; }

.grid { position: absolute; border-collapse: collapse; table-layout: fixed; color: #c9d2da; font-size: 19px; }
.grid td { border: 1px solid #737373; padding: 2px 0 0 5px; white-space: nowrap; overflow: hidden; line-height: 1; }
.t-docs { left: 70px; top: 146px; width: 349px; }
.t-docs td { height: 33.750px; }
.c-doc { width: 57px; }
.c-text { width: 234px; }
.t-idf { left: 613px; top: 96px; width: 257px; }
.t-idf td { height: 34px; }
.c-word { width: 108px; }
.t-vec { left: 465px; top: 369px; width: 458px; }
.t-vec td { height: 25.500px; }
.t-vec .r-head td { height: 33px; }
.v1 { width: 84px; }
.v2 { width: 94px; }
.v3 { width: 91px; }
.v4 { width: 88px; }

.formula { position: absolute; background: #fff; color: #1c1c1c; display: flex; align-items: center; font-family: "Liberation Serif", serif; font-size: 20.100px; }
.f-tf { left: 50px; top: 540px; width: 519px; height: 77px; padding: 2px 0 0 21px; }
.f-idf { left: 593px; top: 540px; width: 491px; height: 67px; padding-left: 11px; }
.f-idf .frac { line-height: 22px; margin-left: 2px; }
.f-idf .den { margin-top: -1px; }
.paren { font-size: 44px; font-weight: 400; line-height: 1; transform: scaleX(.55); margin: 0 -4px; position: relative; top: -3px; }
.comma { margin-right: 3px; }
.eq { margin: 0 5px 0 6px; }
.frac { display: flex; flex-direction: column; align-items: center; margin-left: 1px; line-height: 23px; }
.num { border-bottom: 1px solid #222; padding: 0 1px; white-space: nowrap; }
.den { white-space: nowrap; }
.formula sub { font-size: 14px; align-self: flex-end; margin-bottom: 18px; }

.ink { position: absolute; left: 0; top: 0; }
.ink-lines path { fill: none; stroke: #ee1a52; stroke-width: 1.800; stroke-linecap: round; stroke-linejoin: round; }
.ink-lines .thick { stroke-width: 3; }
.ink-text text { fill: #ee1a52; stroke: #ee1a52; stroke-width: .4; font-family: "Lato", "Noto Sans", sans-serif; font-weight: 300; }
.s18 { font-size: 18px; }
.s20 { font-size: 20px; }
.s24 { font-size: 24px; }
.s28 { font-size: 28px; }
.s30 { font-size: 30px; }
.s32 { font-size: 32px; }
.s36 { font-size: 36px; }
.pointer { fill: #fff; stroke: #222; stroke-width: .6; }

/* Player controls */
.player { height: 53px; flex: none; background: #f0f0f0; display: flex; flex-direction: column; }
.seek-row { height: 21px; flex: none; display: flex; align-items: center; padding: 0 8px; color: #111; }
.time { flex: none; width: 57px; font-size: 16.500px; white-space: nowrap; }
.seek { flex: 1; height: 9px; margin: 0 17px 0 17px; background: linear-gradient(#bcbcbc, #dcdcdc); border-radius: 4px; overflow: hidden; }
.seek-fill { width: 88.150%; height: 100%; background: #2a7bcb; }
.ctrl-row { flex: 1; display: flex; align-items: center; padding: 0 0 2px 4px; gap: 15px; position: relative; }
.btn-group { display: flex; gap: 3px; }
.btn { width: 23px; height: 23px; display: flex; align-items: center; justify-content: center; border: 1px solid #d0d0d0; border-radius: 3px; background: #f5f5f5; }
.btn-play { width: 30px; height: 29px; background: #f7f7f7; }
.volume { margin-left: auto; display: flex; align-items: flex-end; position: relative; width: 90px; height: 24px; margin-right: 6px; margin-top: -3px; }
.vol-icon { position: absolute; left: -6px; bottom: 1px; }
.vol-label { position: absolute; left: 9px; top: -2px; font-size: 14px; color: #7a7a7a; }
.vol-bar { position: absolute; right: 0; bottom: 0; }

/* Taskbar */
.taskbar { height: 72px; flex: none; background: #1c2a2e; border-top: 1px solid #3a4446; display: flex; align-items: center; color: #fff; position: relative; }
.win-logo { margin-left: 31px; flex: none; }
.search-pill { width: 149px; height: 48px; margin-left: 23px; border-radius: 24px; background: #2e383a; display: flex; align-items: center; padding-left: 34px; gap: 8px; font-size: 17px; flex: none; }
.tb-icons { display: flex; margin-left: 4px; height: 100%; align-items: center; }
.tb { width: 66.200px; height: 60px; display: flex; align-items: center; justify-content: center; position: relative; flex: none; }
.tb::after { content: ""; position: absolute; left: 50%; bottom: 1px; width: 8px; height: 5px; margin-left: -4px; border-radius: 3px; background: #9aa2a4; display: none; }
.tb:nth-child(4)::after, .tb:nth-child(6)::after, .tb:nth-child(7)::after, .tb:nth-child(9)::after, .tb:nth-child(10)::after, .tb:nth-child(11)::after, .tb:nth-child(12)::after { display: block; }
.tb-vlc { background: #2e383a; border-radius: 6px; }
.tb-vlc::after { display: block; width: 24px; margin-left: -12px; background: #30d5ff; height: 5px; }
.badge-6 { position: absolute; right: 11px; top: 2px; width: 24px; height: 24px; border-radius: 50%; background: #2fdcff; color: #111; font-weight: 400; font-size: 16px; display: flex; align-items: center; justify-content: center; }
.badge-32 { position: absolute; left: 36px; top: 7px; width: 23px; height: 16px; border-radius: 4px; background: #ee3f3f; color: #fff; font-weight: 400; font-size: 12px; line-height: 16px; text-align: center; }
.avatar { position: absolute; left: 42px; top: 5px; width: 24px; height: 24px; border-radius: 50%; display: flex; align-items: center; justify-content: center; }
.avatar-blue { background: radial-gradient(circle at 40% 40%, #3d2ecf, #1c1466 60%, #2a0b44); }
.avatar-teal { background: #0b2b2b; border: 3px solid #0b6a66; border-radius: 8px; }
.tray { position: absolute; left: 1480px; right: 0; top: 0; bottom: 2px; display: flex; align-items: center; }
.tray-chev { flex: none; }
.lang { width: 50px; margin-left: 22px; display: flex; flex-direction: column; align-items: center; font-size: 17px; line-height: 24px; }
.tray-wifi { margin-left: 20px; flex: none; }
.tray-vol { margin-left: 12px; flex: none; }
.tray-bat { margin-left: 12px; flex: none; }
.clock { width: 100px; margin-left: 7px; display: flex; flex-direction: column; align-items: flex-end; font-size: 17px; line-height: 25px; }
.tray-bell { margin-left: 14px; flex: none; }
.copilot { margin-left: 27px; position: relative; width: 35px; height: 36px; flex: none; }
.pre { position: absolute; right: 0; bottom: 0; width: 27px; height: 11px; background: #ffc400; color: #111; font-size: 9px; line-height: 11px; text-align: center; border-radius: 2px; letter-spacing: .5px; }
```
